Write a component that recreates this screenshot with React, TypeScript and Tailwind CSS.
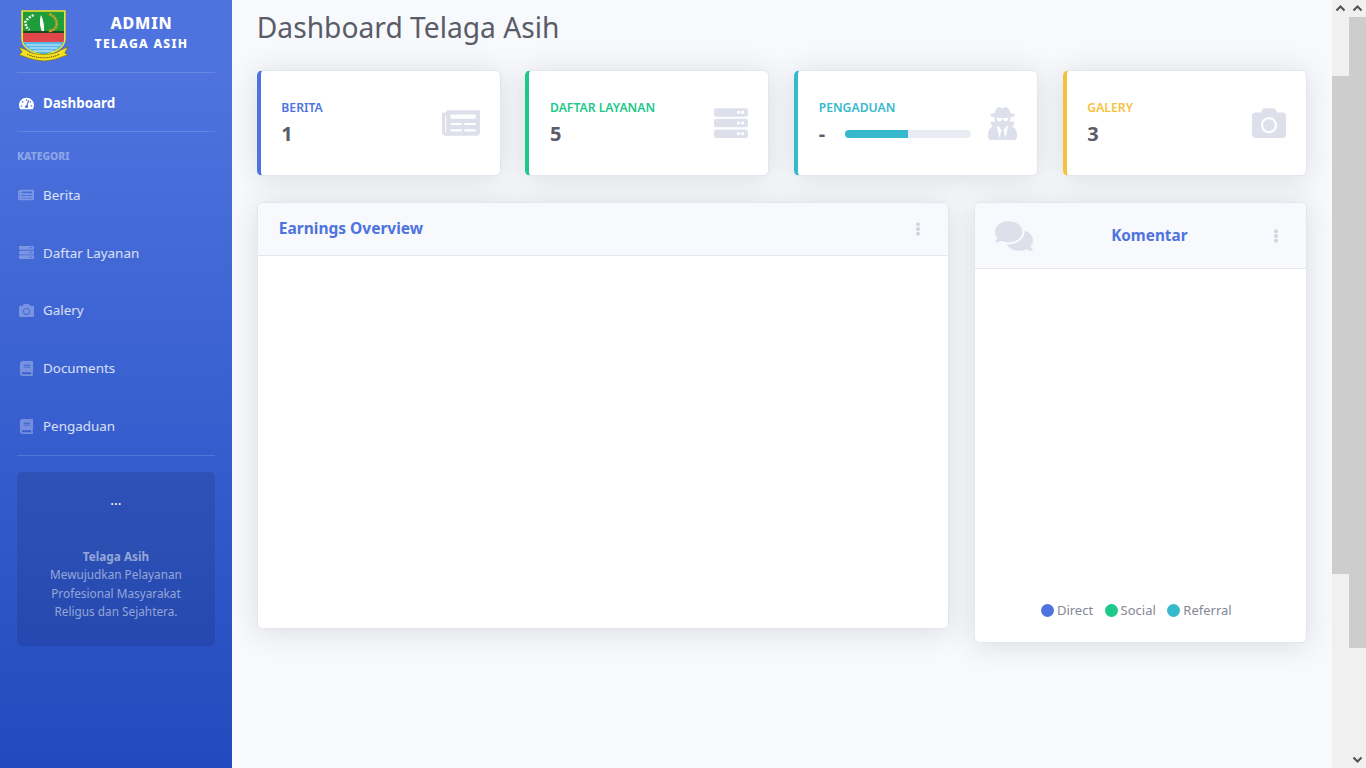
import { FaTachometerAlt, FaNewspaper, FaServer, FaCamera, FaBook, FaUserSecret, FaComments, FaEllipsisV } from "react-icons/fa"
import type { ReactNode } from "react"

function Logo() {
  return (
    <svg width="52" height="54" viewBox="0 0 50 54" preserveAspectRatio="none" className="shrink-0">
      <path d="M4 2H45V30C45 38 36 44 24.5 46C13 44 4 38 4 30Z" fill="#1f9d3a" stroke="#f5e52a" strokeWidth="1.6" />
      <path d="M5 24H44V33H5Z" fill="#e0464a" />
      <path d="M5 23H44" stroke="#1d2b1a" strokeWidth="1.4" />
      <path d="M5 33H44V31C44 38 36 43 24.5 45C13 43 5 38 5 31Z" fill="#5ab7e8" />
      <path d="M8 36H41M11 39H38M15 42H34" stroke="#d6f0fb" strokeWidth="1" />
      <path d="M22 6C20.5 12 21 18 23 22H25C25.500 16 24 10 22 6Z" fill="#fff" />
      <path d="M15 6L10 9L7 13L8 18L11 21" fill="none" stroke="#f3f3f3" strokeWidth="2.4" strokeDasharray="2 1.2" />
      <path d="M30 5C35 7 38 11 37 17C36 20 33 22 29 22" fill="none" stroke="#c9a227" strokeWidth="2.6" strokeDasharray="2.5 .6" />
      <path d="M1 38L8 41C14 47 35 47 41 41L48 38L45 44L48 46C40 48 38 51 25 52C12 51 9 48 1 46L4 43Z" fill="#f5e01f" stroke="#6b6a12" strokeWidth=".6" />
      <path d="M9 45C17 50 32 50 40 45" fill="none" stroke="#4b4a10" strokeWidth="1" strokeDasharray="1 .8" />
    </svg>
  )
}

function SideItem({ icon, label }: { icon: ReactNode; label: string }) {
  return (
    <div className="h-[57.8px] flex items-center gap-[9px] pl-[18px] text-[13.4px] text-white/80">
      <span className="w-4 flex justify-center text-white/30">{icon}</span>
      {label}
    </div>
  )
}

function Sidebar() {
  return (
    <aside className="w-[232px] shrink-0 h-full bg-gradient-to-b from-[#4e73df] from-10% to-[#224abe] px-[17px]">
      <div className="h-[72px] flex items-start pt-[9px] -ml-px">
        <div className="ml-[2px]"><Logo /></div>
        <div className="flex-1 text-center text-white font-extrabold pt-[4px] pr-[2px]">
          <div className="text-[16px] leading-[20px] tracking-[.8px]">ADMIN</div>
          <div className="text-[12.2px] leading-[21px] tracking-[1.28px]">TELAGA ASIH</div>
        </div>
      </div>
      <div className="border-t border-white/15 h-[59px] pt-[2px] flex items-center gap-[9px] pl-px text-[13.4px] font-bold text-white">
        <span className="w-4 flex justify-center"><FaTachometerAlt size={15} /></span>
        Dashboard
      </div>
      <div className="border-t border-white/15 pt-[18px] pb-[4px] text-[10.4px] leading-[12px] font-extrabold text-white/40">KATEGORI</div>
      <div className="-mx-[17px]">
        <SideItem icon={<FaNewspaper size={16} />} label="Berita" />
        <SideItem icon={<FaServer size={15} />} label="Daftar Layanan" />
        <SideItem icon={<FaCamera size={15} />} label="Galery" />
        <SideItem icon={<FaBook size={15} />} label="Documents" />
        <SideItem icon={<FaBook size={15} />} label="Pengaduan" />
      </div>
      <div className="border-t border-white/15" />
      <div className="mt-[16px] h-[174px] rounded-[5.6px] bg-black/10 text-center text-[11.8px] leading-[18.4px] text-white/50 pt-[19px] px-4">
        <div className="text-white text-[14px] h-[56px]">...</div>
        <div className="font-bold">Telaga Asih</div>
        <div>Mewujudkan Pelayanan Profesional Masyarakat Religus dan Sejahtera.</div>
      </div>
    </aside>
  )
}

function StatCard({ label, border, color, icon, children }: { label: string; border: string; color: string; icon: ReactNode; children: ReactNode }) {
  return (
    <div className={`h-[106px] bg-white rounded-[5.6px] border border-[#e3e6f0] border-l-4 ${border} shadow-[0_2.4px_28px_0_rgba(58,59,69,0.15)] pl-[20.5px] pr-5 flex items-center justify-between`}>
      <div className="flex-1">
        <div className={`text-[12.2px] leading-[14px] font-semibold uppercase ${color}`}>{label}</div>
        <div className="mt-[7px] h-6 flex items-center text-[20px] font-bold text-[#5a5c69]">{children}</div>
      </div>
      <div className="text-[#dddfeb] pl-[15px]">{icon}</div>
    </div>
  )
}

function PanelCard({ className, headerClass, children, body }: { className: string; headerClass: string; children: ReactNode; body: ReactNode }) {
  return (
    <div className={`bg-white rounded-[5.6px] border border-[#e3e6f0] shadow-[0_2.4px_28px_0_rgba(58,59,69,0.15)] flex flex-col ${className}`}>
      <div className={`bg-[#f8f9fc] rounded-t-[5.6px] border-b border-[#e3e6f0] flex items-center justify-between ${headerClass}`}>
        {children}
      </div>
      {body}
    </div>
  )
}

function Legend({ dot, label }: { dot: string; label: string }) {
  return (
    <span className="flex items-center gap-[3px]">
      <span className={`w-[13px] h-[13px] rounded-full ${dot}`} />
      {label}
    </span>
  )
}

function ScrollArrow({ up }: { up: boolean }) {
  return (
    <svg width="17" height="17" viewBox="0 0 17 17" className="shrink-0">
      <path d={up ? "M4.500 10.500L8.500 6.500L12.500 10.500" : "M4.500 6.500L8.500 10.500L12.500 6.500"} fill="none" stroke="#505050" strokeWidth="2" />
    </svg>
  )
}

export default function App() {
  return (
    <div className="h-screen flex overflow-hidden bg-[#f8f9fc] font-['Noto_Sans',sans-serif] text-[#858796]">
      <Sidebar />

      {/* Main content */}
      <main className="flex-1 min-w-0 pl-[24.8px] pr-[25.2px]">
        <h1 className="h-[70px] pt-[8px] text-[28.2px] leading-[39px] font-normal text-[#5a5c69]">Dashboard Telaga Asih</h1>

        <div className="grid grid-cols-4 gap-[24.7px]">
          <StatCard label="Berita" border="border-l-[#4e73df]" color="text-[#4e73df]" icon={<FaNewspaper size={38} />}>1</StatCard>
          <StatCard label="Daftar Layanan" border="border-l-[#1cc88a]" color="text-[#1cc88a]" icon={<FaServer size={34} />}>5</StatCard>
          <StatCard label="Pengaduan" border="border-l-[#36b9cc]" color="text-[#36b9cc]" icon={<FaUserSecret size={33} className="-mr-[2px]" />}>
            <span className="w-[26px]">-</span>
            <div className="flex-1 h-2 rounded-[4px] bg-[#eaecf4] overflow-hidden">
              <div className="w-1/2 h-full bg-[#36b9cc]" />
            </div>
          </StatCard>
          <StatCard label="Galery" border="border-l-[#f6c23e]" color="text-[#f6c23e]" icon={<FaCamera size={34} />}>3</StatCard>
        </div>

        <div className="mt-[26px] flex items-start justify-between">
          <PanelCard
            className="w-[692px] h-[427px]"
            headerClass="h-[53px] pl-[21px] pr-[23px]"
            body={null}
          >
            <span className="text-[15.5px] font-bold text-[#4e73df]">Earnings Overview</span>
            <FaEllipsisV size={14} className="text-[#d1d3e2]" />
          </PanelCard>
          <PanelCard
            className="w-[333px] h-[441px]"
            headerClass="h-[66px] pl-5 pr-[23px]"
            body={
              <div className="flex-1 flex items-end justify-center gap-[11.500px] pb-[23px] pr-[8px] text-[13px] leading-[18px]">
                <Legend dot="bg-[#4e73df]" label="Direct" />
                <Legend dot="bg-[#1cc88a]" label="Social" />
                <Legend dot="bg-[#36b9cc]" label="Referral" />
              </div>
            }
          >
            <FaComments size={38} className="text-[#dddfeb]" />
            <span className="text-[15.3px] font-bold text-[#4e73df] pr-[3px]">Komentar</span>
            <FaEllipsisV size={14} className="text-[#d1d3e2]" />
          </PanelCard>
        </div>
      </main>

      {/* Scrollbars of the inner frame and of the page */}
      <div className="w-[17px] shrink-0 h-full bg-[#f0f0f0] flex flex-col">
        <ScrollArrow up />
        <div className="mt-[59px] h-[498px] bg-[#cdcdcd]" />
      </div>
      <div className="w-[17px] shrink-0 h-full bg-[#f0f0f0] flex flex-col">
        <ScrollArrow up />
        <div className="h-[631px] bg-[#cdcdcd]" />
        <div className="flex-1" />
        <ScrollArrow up={false} />
      </div>
    </div>
  )
}
